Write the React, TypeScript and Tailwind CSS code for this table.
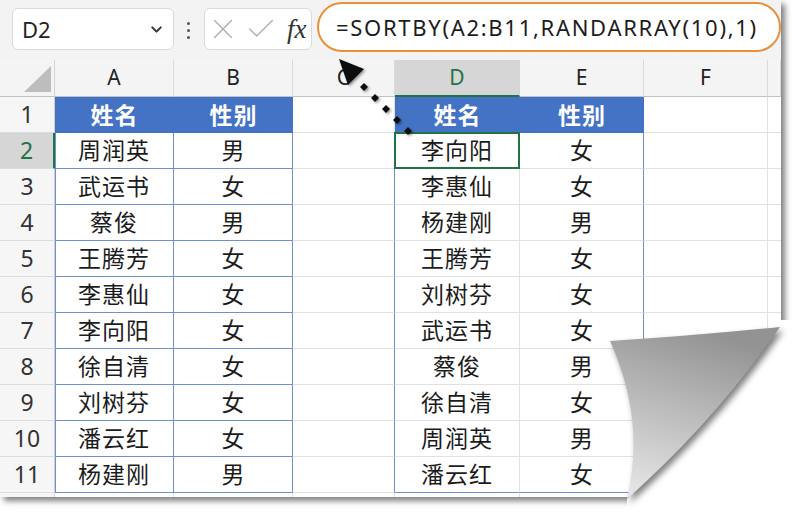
import { Check, ChevronDown, X } from "lucide-react"

const source = [
  ["周润英", "男"],
  ["武运书", "女"],
  ["蔡俊", "男"],
  ["王腾芳", "女"],
  ["李惠仙", "女"],
  ["李向阳", "女"],
  ["徐自清", "女"],
  ["刘树芬", "女"],
  ["潘云红", "女"],
  ["杨建刚", "男"],
]

const sorted = [
  ["李向阳", "女"],
  ["李惠仙", "女"],
  ["杨建刚", "男"],
  ["王腾芳", "女"],
  ["刘树芬", "女"],
  ["武运书", "女"],
  ["蔡俊", "男"],
  ["徐自清", "女"],
  ["周润英", "男"],
  ["潘云红", "女"],
]

const cell = "flex items-center justify-center"

function Toolbar() {
  return (
    <div className="flex h-[60px] items-start bg-[#f3f3f3]">
      <div className="ml-[12px] mt-[8px] flex h-[42px] w-[162px] items-center justify-between rounded-md border border-[#dadada] bg-white pl-[9px] pr-[8px]">
        <span className="text-[22px] text-[#222]">D2</span>
        <ChevronDown size={17} strokeWidth={2.8} className="text-[#333]" />
      </div>
      <div className="ml-[13px] mt-[22px] flex flex-col gap-[4px]">
        <span className="h-[3px] w-[3px] rounded-full bg-[#555]" />
        <span className="h-[3px] w-[3px] rounded-full bg-[#555]" />
        <span className="h-[3px] w-[3px] rounded-full bg-[#555]" />
      </div>
      <div className="ml-[14px] mt-[8px] flex h-[42px] w-[108px] items-center rounded-md border border-[#dadada] bg-white pl-[1px]">
        <X size={34} strokeWidth={1} className="text-[#b0b0b0]" />
        <Check size={34} strokeWidth={1} className="ml-[4px] text-[#b0b0b0]" />
        <span className="ml-[9px] font-['Liberation_Serif',serif] text-[27px] italic leading-none text-[#333]">fx</span>
      </div>
      <div className="ml-[5px] mt-[2px] flex h-[50px] w-[464px] items-center rounded-full border-2 border-[#e8913a] bg-white pl-[17px]">
        <span className="text-[22px] tracking-[1.7px] text-[#1c1c1c]">=SORTBY(A2:B11,RANDARRAY(10),1)</span>
      </div>
    </div>
  )
}

function HeaderRow() {
  const letters = ["A", "B", "C", "D", "E", "F", ""]
  return (
    <>
      <div className="flex items-end justify-end border-b border-r border-b-[#c2c2c2] border-r-[#d4d4d4] bg-[#f4f4f4] pb-[4px] pr-[3px]">
        <div className="h-0 w-0 border-b-[26px] border-l-[27px] border-b-[#bdbdbd] border-l-transparent" />
      </div>
      {letters.map((l) =>
        l === "D" ? (
          <div key={l} className={`${cell} border-b-2 border-r border-b-[#217346] border-r-[#d4d4d4] bg-[#d6d6d6] text-[21px] text-[#217346]`}>
            {l}
          </div>
        ) : (
          <div key={l || "g"} className={`${cell} border-b border-r border-b-[#c2c2c2] border-r-[#dadada] bg-[#f4f4f4] text-[21px] text-[#222]`}>
            {l}
          </div>
        )
      )}
    </>
  )
}

function TitleRow() {
  return (
    <>
      <div className={`${cell} border-b border-r border-b-[#dcdcdc] border-r-[#cfcfcf] bg-[#f6f6f6] text-[23px] text-[#333]`}>1</div>
      <div className={`${cell} bg-[#4472c4] font-bold text-[23px] tracking-[1px] text-white`}>姓名</div>
      <div className={`${cell} bg-[#4472c4] font-bold text-[23px] tracking-[1px] text-white`}>性别</div>
      <div className="border-b border-r border-b-[#e1e1e1] border-r-[#e1e1e1]" />
      <div className={`${cell} bg-[#4472c4] font-bold text-[23px] tracking-[1px] text-white`}>姓名</div>
      <div className={`${cell} bg-[#4472c4] font-bold text-[23px] tracking-[1px] text-white`}>性别</div>
      <div className="border-b border-r border-b-[#e1e1e1] border-r-[#e1e1e1]" />
      <div className="border-b border-b-[#e1e1e1]" />
    </>
  )
}

function DataRow({ n, a, b, d, e }: { n: number; a: string; b: string; d: string; e: string }) {
  const selected = n === 2
  const last = n === 11
  return (
    <>
      <div
        className={
          selected
            ? `${cell} border-b border-r-2 border-b-[#dcdcdc] border-r-[#217346] bg-[#d6d6d6] text-[23px] text-[#217346]`
            : `${cell} border-b border-r border-b-[#dcdcdc] border-r-[#cfcfcf] bg-[#f6f6f6] text-[23px] text-[#333]`
        }
      >
        {n}
      </div>
      <div className={`${cell} border-b border-r border-b-[#6d8fd3] border-r-[#6d8fd3] text-[23px] tracking-[1px] text-[#1c1c1c] shadow-[inset_1px_0_0_#6d8fd3]`}>
        {a}
      </div>
      <div className={`${cell} border-b border-r border-b-[#6d8fd3] border-r-[#6d8fd3] text-[23px] text-[#1c1c1c]`}>{b}</div>
      <div className="border-b border-r border-b-[#e1e1e1] border-r-[#6d8fd3]" />
      <div
        className={
          last
            ? `${cell} border-b border-r border-b-[#6d8fd3] border-r-[#e1e1e1] text-[23px] tracking-[1px] text-[#1c1c1c]`
            : `${cell} relative border-b border-r border-b-[#e1e1e1] border-r-[#e1e1e1] text-[23px] tracking-[1px] text-[#1c1c1c]`
        }
      >
        {d}
        {selected && <div className="absolute -top-px -left-px right-[-1px] bottom-[-1px] border-2 border-[#217346]" />}
      </div>
      <div
        className={
          last
            ? `${cell} border-b border-r border-b-[#6d8fd3] border-r-[#6d8fd3] text-[23px] text-[#1c1c1c]`
            : `${cell} border-b border-r border-b-[#e1e1e1] border-r-[#6d8fd3] text-[23px] text-[#1c1c1c]`
        }
      >
        {e}
      </div>
      <div className="border-b border-r border-b-[#e1e1e1] border-r-[#e1e1e1]" />
      <div className="border-b border-b-[#e1e1e1]" />
    </>
  )
}

function Overlay() {
  const dots = [
    [408, 131],
    [397, 120],
    [386, 109],
    [375, 98],
    [364, 87],
  ]
  return (
    <svg className="pointer-events-none absolute left-0 top-0" width={800} height={519} viewBox="0 0 800 519">
      <defs>
        <filter id="soft" x="-20%" y="-20%" width="140%" height="140%">
          <feDropShadow dx="1.5" dy="1.5" stdDeviation="1" floodOpacity="0.4" />
        </filter>
        <filter id="blur" x="-20%" y="-20%" width="140%" height="140%">
          <feGaussianBlur stdDeviation="3" />
        </filter>
        <linearGradient id="curl" gradientUnits="userSpaceOnUse" x1="700" y1="330" x2="650" y2="495">
          <stop offset="0" stopColor="#939393" />
          <stop offset="0.5" stopColor="#bcbcbc" />
          <stop offset="1" stopColor="#e4e4e4" />
        </linearGradient>
      </defs>

      {/* dotted arrow into the formula */}
      <g filter="url(#soft)" fill="#111">
        {dots.map(([x, y]) => (
          <polygon key={x} points={`${x},${y - 4} ${x + 4},${y} ${x},${y + 4} ${x - 4},${y}`} />
        ))}
        <polygon points="339,59 364,69 348,85" />
      </g>

      {/* page curl */}
      <path d="M 781 320 L 781 327 Q 714 422 627 499 L 627 519 L 800 519 L 800 320 Z" fill="#fff" />
      <path
        d="M 610 341 Q 691 336 780 327 Q 714 422 627 499 Q 646 420 610 341 Z"
        fill="rgba(0,0,0,0.5)"
        filter="url(#blur)"
        transform="translate(3 4)"
      />
      <path d="M 610 341 Q 691 336 780 327 Q 714 422 627 499 Q 646 420 610 341 Z" fill="url(#curl)" />
    </svg>
  )
}

export default function App() {
  return (
    <div className="relative h-[519px] w-[800px] overflow-hidden bg-white font-['Noto_Sans','Noto_Sans_CJK_SC',sans-serif]">
      <div className="h-[497px] w-[781px] bg-white shadow-[4px_4px_6px_rgba(0,0,0,0.5)]">
        <Toolbar />
        <div className="grid grid-cols-[55px_119px_119px_102px_125px_124px_124px_13px] grid-rows-[37px_repeat(11,36px)_4px]">
          <HeaderRow />
          <TitleRow />
          {source.map(([a, b], i) => (
            <DataRow key={i} n={i + 2} a={a} b={b} d={sorted[i][0]} e={sorted[i][1]} />
          ))}
          <div className="border-r border-r-[#cfcfcf] bg-[#f6f6f6]" />
          <div className="border-r border-r-[#e1e1e1]" />
          <div className="border-r border-r-[#e1e1e1]" />
          <div className="border-r border-r-[#e1e1e1]" />
          <div className="border-r border-r-[#e1e1e1]" />
          <div className="border-r border-r-[#e1e1e1]" />
          <div className="border-r border-r-[#e1e1e1]" />
          <div />
        </div>
      </div>
      <Overlay />
    </div>
  )
}
